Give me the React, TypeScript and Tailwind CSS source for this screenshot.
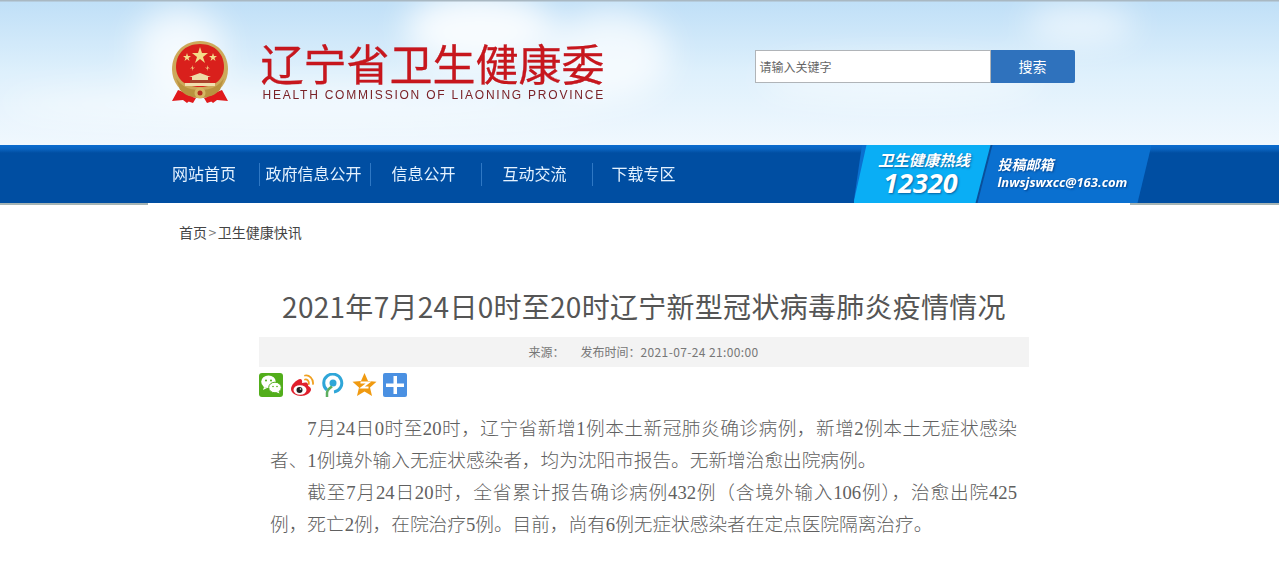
const cjk = "font-['Noto_Sans_CJK_SC','Liberation_Sans',sans-serif]";

function Emblem() {
  return (
    <svg width="60" height="64" viewBox="0 0 60 64" className="shrink-0">
      <path d="M8 50 L2 61 L13 60 L17 63 L24 56 Z M52 50 L58 61 L47 60 L43 63 L36 56 Z" fill="#e01a1c" />
      <path d="M30 1 C12 1 2 15 2 29 C2 42 10 52 22 56 L38 56 C50 52 58 42 58 29 C58 15 48 1 30 1 Z" fill="#cda95a" />
      <path d="M30 4 C14 4 6 15 6 27 C6 38 14 47 30 47 C46 47 54 38 54 27 C54 15 46 4 30 4 Z" fill="#d9201c" />
      <polygon points="30,7 32,13 38,13 33,17 35,23 30,19 25,23 27,17 22,13 28,13" fill="#f3dc8a" />
      <polygon points="17,13 18,16 21,16 18.500,18 19.500,21 17,19 14.500,21 15.500,18 13,16 16,16" fill="#f3dc8a" />
      <polygon points="43,13 44,16 47,16 44.500,18 45.500,21 43,19 40.500,21 41.500,18 39,16 42,16" fill="#f3dc8a" />
      <path d="M22 25l1 3 2-1-2 2v2l-1-3-2 1 2-2zM38 25l-1 3-2-1 2 2v2l1-3 2 1-2-2z" fill="#f3dc8a" />
      <path d="M19 37 L30 33 L41 37 L38 37 L38 40 L22 40 L22 37 Z" fill="#eedba6" />
      <rect x="20" y="40" width="20" height="3" fill="#a9432c" />
      <rect x="15" y="43" width="30" height="3" fill="#f1dfae" />
      <path d="M6 38 C11 46 18 50 30 50 C42 50 49 46 54 38 L50 50 C44 56 38 58 30 58 C22 58 16 56 10 50 Z" fill="#b9933f" />
      <circle cx="30" cy="53" r="5.500" fill="#d6b763" />
      <circle cx="30" cy="53" r="2.500" fill="#b52d20" />
      <path d="M15 55 L26 58 L23 63 L14 60 Z M45 55 L34 58 L37 63 L46 60 Z" fill="#e01a1c" />
    </svg>
  );
}

function Icons() {
  return (
    <div className="flex items-center gap-[7px] h-[34px] mt-px">
      <svg width="24" height="24" viewBox="0 0 24 24">
        <rect width="24" height="24" rx="3" fill="#52ae1b" />
        <ellipse cx="9.500" cy="8.800" rx="7.300" ry="6.300" fill="#fff" />
        <path d="M5 14l-1 3 4-2z" fill="#fff" />
        <ellipse cx="16" cy="14.500" rx="6.300" ry="5.300" fill="#fff" stroke="#52ae1b" strokeWidth="1" />
        <path d="M19.500 18l1 2.500-3.500-1.500z" fill="#fff" />
        <circle cx="7" cy="7.500" r="1" fill="#52ae1b" />
        <circle cx="12" cy="7.500" r="1" fill="#52ae1b" />
        <circle cx="14" cy="13.500" r=".8" fill="#52ae1b" />
        <circle cx="18" cy="13.500" r=".8" fill="#52ae1b" />
      </svg>
      <svg width="24" height="24" viewBox="0 0 24 24">
        <path d="M1 16c0-4 5-9 9-10 2 0 2.500 2 2 4 3-1 6-1 6 1.500 0 1 0 1.500 1 2 1.500 1 2 2 2 3 0 3-5 6.500-10 6.500S1 20 1 16z" fill="#e0202c" />
        <ellipse cx="10" cy="17" rx="6.500" ry="4.800" fill="#fff" />
        <circle cx="9.500" cy="17" r="3" fill="#222" />
        <circle cx="10.500" cy="16" r=".8" fill="#fff" />
        <path d="M15 2.500c4-1 8.500 3 8 8.500M15 6.500c2-.5 4.300 1.500 3.800 4.500" fill="none" stroke="#f0a020" strokeWidth="1.800" strokeLinecap="round" />
      </svg>
      <svg width="24" height="24" viewBox="0 0 24 24">
        <path d="M6 17 A9 9 0 1 1 13 19" fill="none" stroke="#2fa6d8" strokeWidth="3" />
        <circle cx="12" cy="10" r="3.500" fill="#2fa6d8" />
        <path d="M6 24v-4c0-3 3-5 5-6.500" fill="none" stroke="#5cae60" strokeWidth="2.500" />
      </svg>
      <svg width="25" height="24" viewBox="0 0 24 24">
        <polygon points="12,0 15.500,8 24,8.800 17.500,14.500 19.500,23 12,18.500 4.500,23 6.500,14.500 0,8.800 8.500,8" fill="#f09a10" />
        <path d="M8 9.500h8l-6.500 5h6.500" fill="none" stroke="#fff" strokeWidth="2" />
      </svg>
      <svg width="24" height="24" viewBox="0 0 24 24" className="ml-[-1px]">
        <rect width="24" height="24" rx="2" fill="#4a90e2" />
        <rect x="10.500" y="3" width="3.500" height="18" fill="#fff" />
        <rect x="3" y="10.500" width="18" height="3.500" fill="#fff" />
      </svg>
    </div>
  );
}

const navs: [string, string][] = [
  ["网站首页", "w-[110px] pl-[23.500px]"],
  ["政府信息公开", "w-[111px] pl-[6px] border-l border-[#2f78c4]"],
  ["信息公开", "w-[111px] pl-[21px] border-l border-[#2f78c4]"],
  ["互动交流", "w-[111px] pl-[21px] border-l border-[#2f78c4]"],
  ["下载专区", "w-[111px] pl-[19px] border-l border-[#2f78c4]"],
];

function Clouds() {
  return (
    <svg className="absolute inset-0" width="1279" height="145" viewBox="0 0 1279 145" preserveAspectRatio="none">
      <defs>
        <filter id="blur" x="-50%" y="-50%" width="200%" height="200%"><feGaussianBlur stdDeviation="16" /></filter>
      </defs>
      <g filter="url(#blur)" fill="#fff">
        <ellipse cx="180" cy="50" rx="45" ry="42" opacity=".75" />
        <ellipse cx="480" cy="30" rx="75" ry="38" opacity=".85" />
        <ellipse cx="610" cy="55" rx="60" ry="45" opacity=".7" />
        <ellipse cx="1080" cy="25" rx="55" ry="20" opacity=".6" />
        <ellipse cx="900" cy="80" rx="140" ry="22" opacity=".5" />
        <ellipse cx="300" cy="105" rx="300" ry="20" opacity=".5" />
      </g>
      <rect width="1279" height="1.500" fill="#a9b8c2" />
    </svg>
  );
}

export default function App() {
  return (
    <div className={`w-[1279px] h-[587px] overflow-hidden bg-white ${cjk}`}>
      <header className="relative h-[145px] bg-gradient-to-b from-[#bfdff7] via-[#def0fc] to-[#f0f8fe] flex justify-center">
        <Clouds />
        <div className="relative w-[982px] flex items-start pl-[21px]">
          <div className="mt-[40px]"><Emblem /></div>
          <div className="ml-[31px] mt-[40px]">
            <div className="text-[43px] leading-[44px] text-[#c8161d] whitespace-nowrap [-webkit-text-stroke:0.3px_#b8141c]">辽宁省卫生健康委</div>
            <div className="ml-[2px] mt-[3px] text-[12px] leading-[16px] tracking-[1.77px] text-[#7a2228] font-['Liberation_Sans',sans-serif] whitespace-nowrap">HEALTH COMMISSION OF LIAONING PROVINCE</div>
          </div>
          <div className="absolute left-[606px] top-[50px] flex">
            <div className="w-[236px] h-[33px] bg-white border border-[#b0b4b8] pl-[4px] text-[12px] leading-[32px] text-[#666]">请输入关键字</div>
            <div className="w-[84px] h-[33px] bg-[#2f72bd] rounded-r-[2px] text-white text-[14px] leading-[33px] text-center">搜索</div>
          </div>
        </div>
      </header>
      <div className="relative h-[58px] bg-[linear-gradient(#0a6ccf,#0a64c0_4px,#004ea2_8px)] flex justify-center">
        <div className="w-[982px] flex items-center relative">
          {navs.map(([t, c]) => (
            <div key={t} className={`${c} h-[23px] leading-[21px] text-[16px] text-[#e4f2ff] whitespace-nowrap`}>{t}</div>
          ))}
          <div className="absolute left-[705px] top-0 w-[298px] h-[58px] [clip-path:polygon(8.500px_0,100%_0,calc(100%-14px)_100%,0_100%)] bg-[#0a70d0]">
            <div className="absolute left-[2px] top-0 h-full w-[137px] [clip-path:polygon(13px_0,100%_0,calc(100%-15px)_100%,0_100%)] bg-[#0a4f9a]" />
            <div className="absolute left-0 top-0 h-full w-[137px] [clip-path:polygon(13px_0,100%_0,calc(100%-15px)_100%,0_100%)] bg-[#0aaef5] text-white text-center italic [text-shadow:1px_1px_2px_rgba(0,50,110,.6)]">
              <div className="text-[15.300px] leading-[18px] font-bold mt-[5px] pl-[4px] whitespace-nowrap">卫生健康热线</div>
              <div className="text-[27px] leading-[30px] font-bold pr-[3px] font-['Open_Sans',sans-serif]">12320</div>
            </div>
            <div className="absolute left-[144px] top-[10px] text-white italic font-bold [text-shadow:1px_1px_2px_rgba(0,40,100,.6)]">
              <div className="text-[14px] leading-[18px]">投稿邮箱</div>
              <div className="text-[13px] leading-[18px] font-['Open_Sans',sans-serif] whitespace-nowrap">lnwsjswxcc@163.com</div>
            </div>
          </div>
        </div>
      </div>
      <div className="h-[3px] relative">
        <div className="absolute left-0 top-0 w-[148px] h-[2px] bg-[#a6b4b4]" />
        <div className="absolute right-0 top-0 w-[149px] h-[2px] bg-[#a6b4b4]" />
      </div>
      <div className="w-[982px] mx-auto pl-[30.500px] pt-[16px] text-[14px] leading-[20px] text-[#444]">首页<span className="px-[1.500px] text-[#777]">&gt;</span>卫生健康快讯</div>
      <main className="w-[770px] ml-[259px]">
        <h1 className="mt-[44px] text-center text-[28px] leading-[40px] tracking-[.28px] font-normal text-[#555] whitespace-nowrap">2021年7月24日0时至20时辽宁新型冠状病毒肺炎疫情情况</h1>
        <div className="mt-[11px] h-[30px] bg-[#f3f3f3] flex justify-center gap-[16px] pr-[1px] text-[12px] leading-[30px] text-[#777]">
          <span>来源：</span>
          <span>发布时间：<span className="tracking-[.37px]">2021-07-24 21:00:00</span></span>
        </div>
        <Icons />
        <article className="mt-[11px] ml-[11px] w-[747px] text-[18.670px] leading-[32px] text-[#606060] text-justify font-light font-['Liberation_Serif','Noto_Sans_CJK_SC',serif]">
          <p className="indent-[2em]">7月24日0时至20时，辽宁省新增1例本土新冠肺炎确诊病例，新增2例本土无症状感染者、1例境外输入无症状感染者，均为沈阳市报告。无新增治愈出院病例。</p>
          <p className="indent-[2em]">截至7月24日20时，全省累计报告确诊病例432例（含境外输入106例），治愈出院425例，死亡2例，在院治疗5例。目前，尚有6例无症状感染者在定点医院隔离治疗。</p>
        </article>
      </main>
    </div>
  );
}
